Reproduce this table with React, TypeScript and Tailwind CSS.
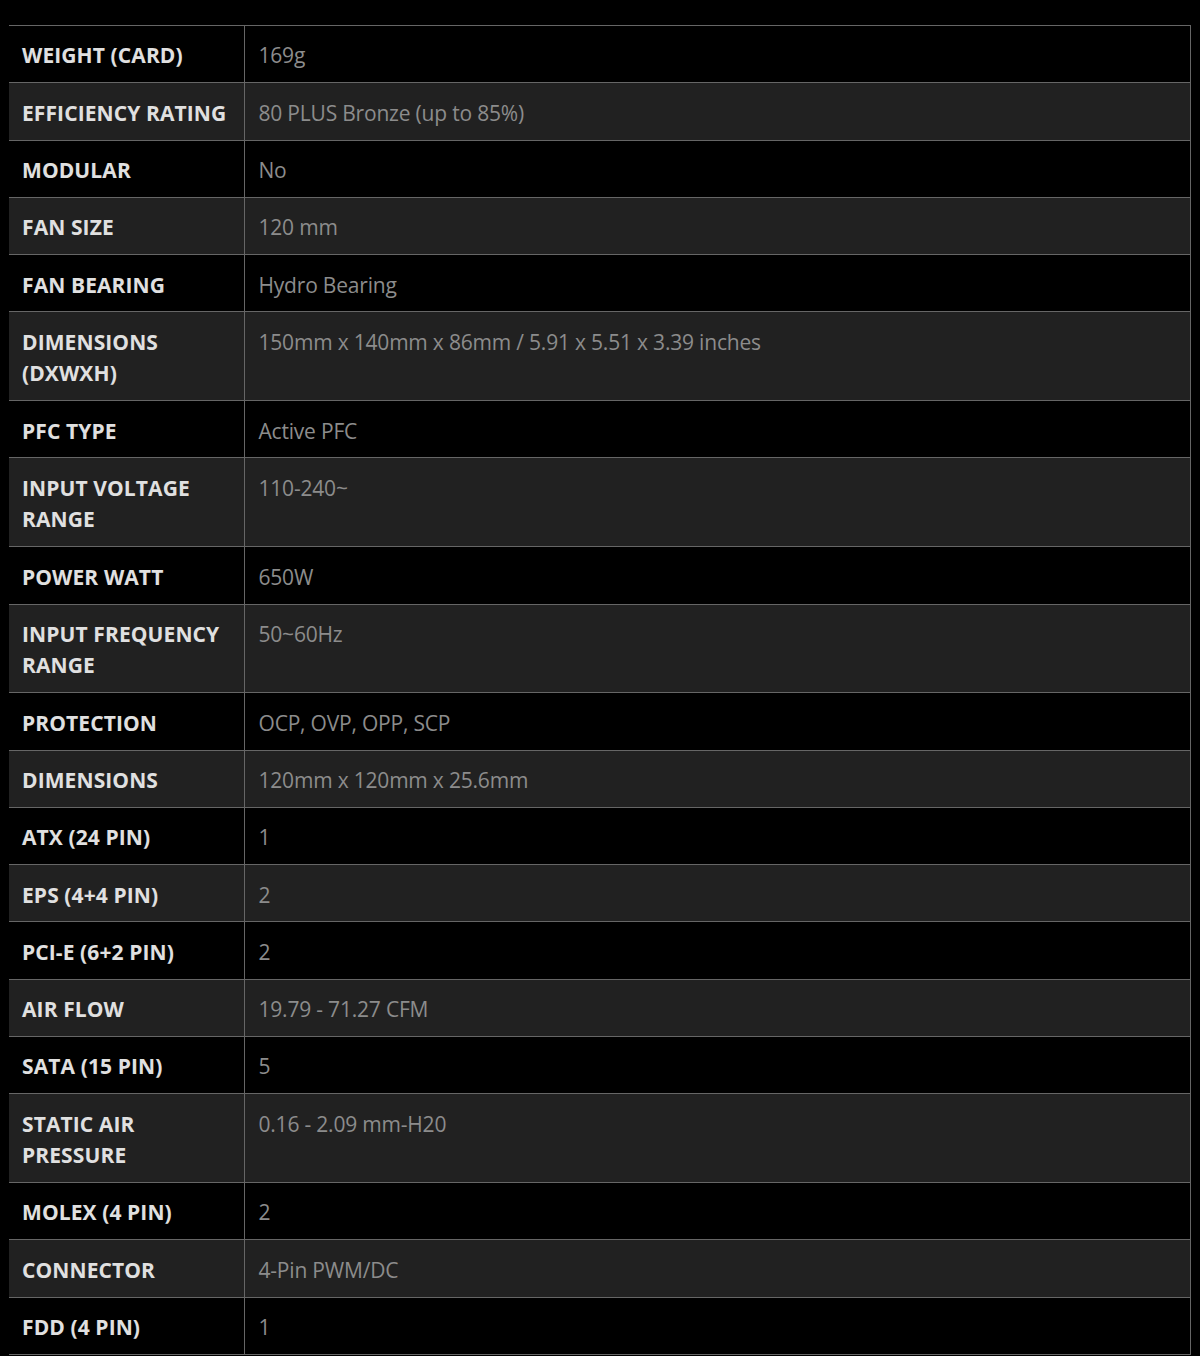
import React from 'react';

const specs: [string, string][] = [
  ['WEIGHT (CARD)', '169g'],
  ['EFFICIENCY RATING', '80 PLUS Bronze (up to 85%)'],
  ['MODULAR', 'No'],
  ['FAN SIZE', '120 mm'],
  ['FAN BEARING', 'Hydro Bearing'],
  ['DIMENSIONS (DXWXH)', '150mm x 140mm x 86mm / 5.91 x 5.51 x 3.39 inches'],
  ['PFC TYPE', 'Active PFC'],
  ['INPUT VOLTAGE RANGE', '110-240~'],
  ['POWER WATT', '650W'],
  ['INPUT FREQUENCY RANGE', '50~60Hz'],
  ['PROTECTION', 'OCP, OVP, OPP, SCP'],
  ['DIMENSIONS', '120mm x 120mm x 25.6mm'],
  ['ATX (24 PIN)', '1'],
  ['EPS (4+4 PIN)', '2'],
  ['PCI-E (6+2 PIN)', '2'],
  ['AIR FLOW', '19.79 - 71.27 CFM'],
  ['SATA (15 PIN)', '5'],
  ['STATIC AIR PRESSURE', '0.16 - 2.09 mm-H20'],
  ['MOLEX (4 PIN)', '2'],
  ['CONNECTOR', '4-Pin PWM/DC'],
  ['FDD (4 PIN)', '1'],
];

export default function App() {
  return (
    <div className="bg-white min-h-screen">
      <div className="bg-black pt-[25px] pl-[9px] pr-[9px] pb-px" style={{ fontFamily: '"Open Sans", "Noto Sans", sans-serif' }}>
        <table className="w-full border-collapse border-t border-r border-b border-[#666] text-[21px] leading-[31.5px]">
          <tbody>
            {specs.map(([label, value], i) => (
              <tr key={i} className={`border-b border-[#666] ${i % 2 === 1 ? 'bg-[#212121]' : 'bg-black'}`}>
                <td className="w-[235px] align-top border-r border-[#666] pl-[13px] pr-[10px] pt-[14.4px] pb-[10.4px] font-bold text-[#e0e0e0] tracking-[0.1px]">
                  {label}
                </td>
                <td className="align-top pl-[14px] pr-[10px] pt-[14.4px] pb-[10.4px] text-[#8c8c8c] tracking-[-0.2px]">
                  {value}
                </td>
              </tr>
            ))}
          </tbody>
        </table>
      </div>
    </div>
  );
}
